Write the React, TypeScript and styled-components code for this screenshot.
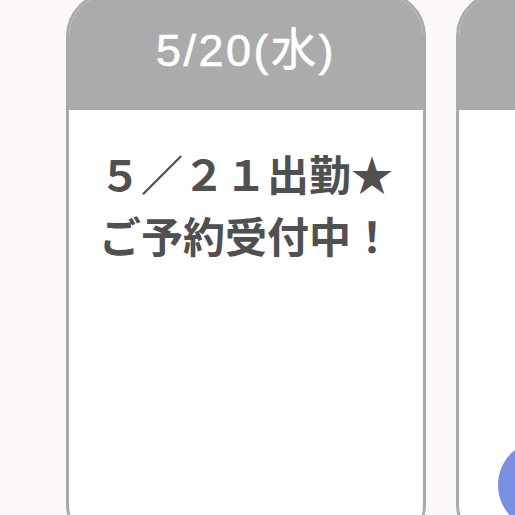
import React from 'react';
import styled, { createGlobalStyle } from 'styled-components';

const GlobalStyle = createGlobalStyle`
  html, body {
    margin: 0;
    padding: 0;
    background: #fdf8fb;
    overflow: hidden;
  }
  body {
    font-family: 'Liberation Sans', 'Noto Sans CJK JP', sans-serif;
  }
`;

const Page = styled.div`
  width: 515px;
  height: 515px;
  overflow: hidden;
  background: #fdf8fb;
`;

const CardRow = styled.div`
  display: flex;
  gap: 30px;
  padding-left: 66px;
  margin-top: -8px;
`;

const Card = styled.div`
  flex: 0 0 360px;
  height: 556px;
  box-sizing: border-box;
  border: 3px solid #aaaaaa;
  border-radius: 44px;
  overflow: hidden;
  background: #ffffff;
  display: flex;
  flex-direction: column;
`;

const CardHeader = styled.div`
  height: 115px;
  background: #ababab;
  display: flex;
  align-items: center;
  justify-content: center;
  padding-bottom: 12px;
  box-sizing: border-box;
`;

const DateLabel = styled.span`
  color: #ffffff;
  font-size: 45px;
  font-weight: 400;
  letter-spacing: 2.5px;
  -webkit-text-stroke: 0.6px #ffffff;
`;

const CardBody = styled.div`
  padding: 32px 0 0;
  display: flex;
  justify-content: center;
`;

const Message = styled.p`
  margin: 0;
  font-family: 'Noto Sans CJK JP', sans-serif;
  font-size: 42px;
  font-weight: 700;
  line-height: 62px;
  color: #505050;
  white-space: pre-line;
`;

const FloatingButton = styled.button`
  position: fixed;
  left: 498px;
  top: 440px;
  width: 90px;
  height: 90px;
  border-radius: 50%;
  border: none;
  background: #7b8fe2;
  padding: 0;
`;

const cards = [
  { date: '5/20(水)', message: '５／２１出勤★\nご予約受付中！' },
  { date: '5/21(木)', message: '' },
];

export default function App() {
  return (
    <Page>
      <GlobalStyle />
      <CardRow>
        {cards.map((c) => (
          <Card key={c.date}>
            <CardHeader>
              <DateLabel>{c.date}</DateLabel>
            </CardHeader>
            <CardBody>
              <Message>{c.message}</Message>
            </CardBody>
          </Card>
        ))}
      </CardRow>
      <FloatingButton aria-label="menu" />
    </Page>
  );
}
